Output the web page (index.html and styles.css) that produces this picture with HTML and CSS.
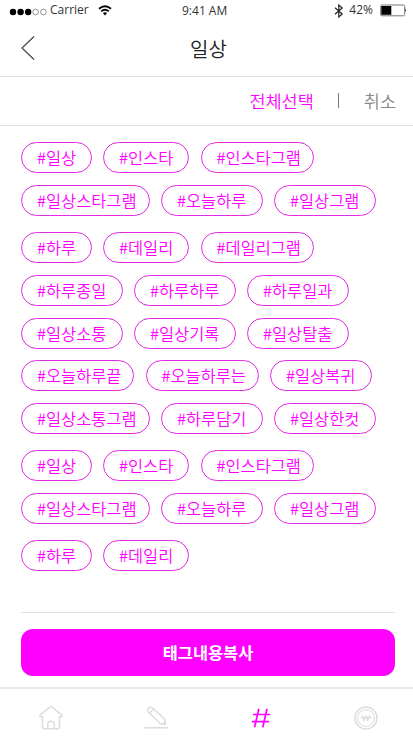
FILE: index.html
```html
<!DOCTYPE html>
<html lang="ko">
    <head>
        <meta charset="utf-8">
        <title>일상</title>
        <link rel="stylesheet" href="styles.css">
    </head>
    <body>
        <div class="statusBar">
            <div class="statusLeft">
                <svg class="signal" width="38" height="8" viewBox="0 0 38 8">
                    <circle cx="4" cy="4" r="3.2"/>
                    <circle cx="11.6" cy="4" r="3.2"/>
                    <circle cx="19.2" cy="4" r="3.2"/>
                    <circle class="empty" cx="26.6" cy="4" r="2.8"/>
                    <circle class="empty" cx="34.4" cy="4" r="2.8"/>
                </svg>
                <span class="carrier">Carrier</span>
                <svg class="wifi" width="14" height="11" viewBox="0 0 14 11">
                    <path d="M1 3.8Q7-1.2 13 3.8M3.2 6.2Q7 3.2 10.8 6.2"/>
                    <path class="dot" d="M4.9 8Q7 6.6 9.1 8L7 10.4Z"/>
                </svg>
            </div>
            <div class="statusTime">9:41 AM</div>
            <div class="statusRight">
                <svg class="bluetooth" width="10" height="14" viewBox="0 0 10 14">
                    <path d="M1 3.8L8.2 10L4.8 13V1L8.2 4L1 10.2"/>
                </svg>
                <span class="percent">42%</span>
                <svg class="battery" width="27" height="13" viewBox="0 0 27 13">
                    <rect class="case" x=".7" y="1" width="24" height="10.8" rx="1.3"/>
                    <rect x="1.3" y="2" width="10" height="8.8"/>
                    <path d="M25.4 4.6Q27 6.4 25.4 8.2Z"/>
                </svg>
            </div>
        </div>

        <div class="header">
            <svg class="back" width="14" height="26" viewBox="0 0 14 26">
                <path d="M13 1.5L1 13L13 24.5"/>
            </svg>
            <div class="title">일상</div>
        </div>

        <div class="selectBar">
            <span class="selectAll">전체선택</span>
            <span class="divider"></span>
            <span>취소</span>
        </div>

        <div class="content">
            <div class="tagGroup">
                <div class="tagRow">
                    <div class="tag len2">#일상</div>
                    <div class="tag len3">#인스타</div>
                    <div class="tag len5">#인스타그램</div>
                </div>
                <div class="tagRow">
                    <div class="tag len6">#일상스타그램</div>
                    <div class="tag len4">#오늘하루</div>
                    <div class="tag len4">#일상그램</div>
                </div>
            </div>
            <div class="tagGroup">
                <div class="tagRow">
                    <div class="tag len2">#하루</div>
                    <div class="tag len3">#데일리</div>
                    <div class="tag len5">#데일리그램</div>
                </div>
                <div class="tagRow">
                    <div class="tag len4">#하루종일</div>
                    <div class="tag len4">#하루하루</div>
                    <div class="tag len4">#하루일과</div>
                </div>
                <div class="tagRow">
                    <div class="tag len4">#일상소통</div>
                    <div class="tag len4">#일상기록</div>
                    <div class="tag len4">#일상탈출</div>
                </div>
                <div class="tagRow">
                    <div class="tag len5">#오늘하루끝</div>
                    <div class="tag len5">#오늘하루는</div>
                    <div class="tag len4">#일상복귀</div>
                </div>
                <div class="tagRow">
                    <div class="tag len6">#일상소통그램</div>
                    <div class="tag len4">#하루담기</div>
                    <div class="tag len4">#일상한컷</div>
                </div>
            </div>
            <div class="tagGroup">
                <div class="tagRow">
                    <div class="tag len2">#일상</div>
                    <div class="tag len3">#인스타</div>
                    <div class="tag len5">#인스타그램</div>
                </div>
                <div class="tagRow">
                    <div class="tag len6">#일상스타그램</div>
                    <div class="tag len4">#오늘하루</div>
                    <div class="tag len4">#일상그램</div>
                </div>
            </div>
            <div class="tagGroup">
                <div class="tagRow">
                    <div class="tag len2">#하루</div>
                    <div class="tag len3">#데일리</div>
                </div>
            </div>
        </div>

        <div class="copyArea">
            <button class="copyButton">태그내용복사</button>
        </div>

        <div class="tabBar">
            <svg class="tabIcon" width="26" height="26" viewBox="0 0 26 26">
                <path d="M4.5 11.8H2.6Q1.2 11 2.2 9.9L12 2Q13 1.3 14 2L23.8 9.9Q24.8 11 23.4 11.8H21.5V22Q21.5 23.7 19.8 23.7H6.2Q4.5 23.7 4.5 22Z"/>
                <path d="M9.8 23.5V18.5Q9.8 16.3 13 16.3T16.2 18.5V23.5"/>
            </svg>
            <svg class="tabIcon" width="26" height="26" viewBox="0 0 26 26">
                <path d="M5.3 7Q4 5 5.4 3.3T9.4 2.8L21.6 14.3L22.6 19.6L17.2 18.5Z"/>
                <path d="M7 7.6L10.4 4.4M20.4 19L22.4 17.2"/>
                <path d="M1.7 22.8H24.3"/>
            </svg>
            <svg class="tabIcon active" width="26" height="26" viewBox="0 0 26 26">
                <path d="M10.8 3.8L6.6 22.3M19 3.8L14.8 22.3M5 9.5H22.3M3.8 16.7H21.1"/>
            </svg>
            <svg class="tabIcon" width="26" height="26" viewBox="0 0 26 26">
                <circle cx="13" cy="13" r="11"/>
                <circle class="thin" cx="13" cy="13" r="8.4"/>
                <path class="won" d="M9.4 10L11.2 16L13 10.5L14.8 16L16.6 10M8 12.6H18"/>
            </svg>
        </div>
    </body>
</html>
```

FILE: styles.css
```css
* {
    box-sizing: border-box;
}

body {
    margin: 0;
    height: 740px;
    display: flex;
    flex-direction: column;
    overflow: hidden;
    background: #fff;
    color: #222;
    font-family: "Noto Sans CJK KR", "Noto Sans", sans-serif;
}

svg {
    flex: none;
    display: block;
}

.statusBar {
    height: 20px;
    padding: 0 6px 0 9px;
    display: grid;
    grid-template-columns: 173px auto 1fr;
    align-items: center;
    font-family: "Open Sans", "Noto Sans", sans-serif;
    font-size: 12px;
    line-height: 20px;
    color: #333;
}

.statusLeft,
.statusRight {
    display: flex;
    align-items: center;
}

.statusRight {
    justify-content: flex-end;
}

.statusTime {
    padding-top: 1px;
}

.carrier,
.percent {
    padding-bottom: 1px;
}

.signal {
    margin: 2px 3px 0 0;
}

.signal .empty {
    fill: none;
    stroke: #666;
    stroke-width: 0.7;
}

.wifi {
    margin-left: 9px;
    fill: none;
    stroke: #000;
    stroke-width: 1.8;
}

.wifi .dot {
    fill: #000;
    stroke: none;
}

.bluetooth {
    margin-right: 5px;
    fill: none;
    stroke: #222;
    stroke-width: 1.2;
}

.battery {
    margin-left: 7px;
}

.battery .case {
    fill: none;
    stroke: #777;
}

.header {
    height: 57px;
    padding: 0 21px;
    display: grid;
    grid-template-columns: 14px 1fr 10px;
    align-items: center;
    border-bottom: 1px solid #e2e2e2;
}

.back {
    fill: none;
    stroke: #444;
    stroke-width: 1.2;
}

.title {
    padding-top: 1px;
    text-align: center;
    font-size: 20px;
    font-weight: 350;
    line-height: 28px;
}

.selectBar {
    height: 49px;
    padding: 0 17px 2px 0;
    display: flex;
    align-items: center;
    justify-content: flex-end;
    border-bottom: 1px solid #e2e2e2;
    font-size: 17.5px;
    font-weight: 350;
    color: #888;
}

.selectAll {
    color: #f0f;
}

.divider {
    width: 1px;
    height: 15px;
    margin: 1px 25px 0 24px;
    background: #777;
}

.content {
    height: 487px;
    margin: 0 18px 0 21px;
    padding-top: 16px;
    display: flex;
    flex-direction: column;
    gap: 15.9px;
    border-bottom: 1px solid #e2e2e2;
}

.tagGroup {
    display: flex;
    flex-direction: column;
    gap: 11.9px;
}

.tagRow {
    display: flex;
    gap: 11.5px;
}

.tag {
    height: 31px;
    padding-left: 15px;
    border: 1px solid #e32be3;
    border-radius: 16px;
    color: #f0f;
    font-size: 16.4px;
    font-weight: 350;
    line-height: 28px;
    white-space: nowrap;
}

.len2 { width: 70.5px; }
.len3 { width: 86px; }
.len4 { width: 101.5px; }
.len5 { width: 113px; }
.len6 { width: 128.5px; }

.copyArea {
    height: 76px;
    padding: 16px 18px 0 21px;
    border-bottom: 2px solid #e8e8e8;
}

.copyButton {
    display: block;
    width: 100%;
    height: 47px;
    padding: 0 0 2px;
    border: none;
    border-radius: 12px;
    background: #f0f;
    color: #fff;
    font-family: inherit;
    font-size: 16.4px;
    font-weight: 700;
}

.tabBar {
    flex: 1;
    padding: 7px 34px 0 38px;
    display: flex;
    align-items: center;
    justify-content: space-between;
}

.tabIcon {
    fill: none;
    stroke: #dcdcdc;
    stroke-width: 1.5;
    stroke-linejoin: round;
    stroke-linecap: round;
}

.tabIcon .thin {
    stroke-width: 1;
}

.tabIcon .won {
    stroke-width: 1.1;
}

.tabIcon.active {
    stroke: #f0f;
    stroke-width: 1.7;
    stroke-linecap: butt;
}
```
